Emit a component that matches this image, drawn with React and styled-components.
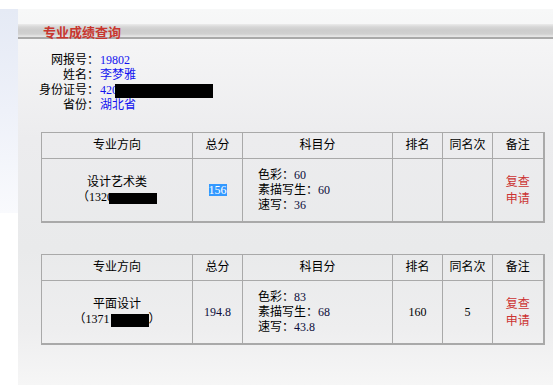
import React from "react";
import styled, { createGlobalStyle } from "styled-components";

const Global = createGlobalStyle`
  html, body { margin: 0; padding: 0; background: #ffffff; }
  body {
    font-family: "Liberation Serif", "Noto Sans CJK SC", serif;
    font-size: 12px;
    color: #000;
  }
`;

const Page = styled.div`
  display: flex;
  align-items: flex-start;
  padding-top: 9px;
  width: 553px;
  height: 376px;
  overflow: hidden;
`;

const LeftStrip = styled.div`
  width: 18px;
  flex: none;
  height: 204px;
  background: linear-gradient(to bottom, #e5eaf5 0%, #eef1f9 50%, #f9fafd 100%);
`;

const Panel = styled.div`
  flex: 1;
  height: 376px;
  background: linear-gradient(
    to bottom,
    #f7f8f8 0px,
    #f4f4f5 40px,
    #ececee 130px,
    #e9eaeb 240px,
    #eeeeef 320px,
    #f6f6f6 376px
  );
  padding-top: 15px;
  box-sizing: border-box;
`;

const HeaderBar = styled.div`
  height: 13px;
  border-bottom: 2px solid #a9a9a9;
  background: linear-gradient(
    to bottom,
    #ebebeb 0px,
    #d6d6d6 3px,
    #cdcdcd 6px,
    #d0d0d0 10px,
    #e4e4e4 12px,
    #e6e6e6 13px
  );
  padding-left: 25px;
`;

const Title = styled.span`
  display: block;
  font-family: "Noto Sans CJK SC", sans-serif;
  font-weight: bold;
  font-size: 13px;
  line-height: 14px;
  color: #c8362e;
  padding-top: 1px;
`;

const Info = styled.div`
  display: grid;
  grid-template-columns: 60px auto;
  column-gap: 1px;
  margin: 14px 0 0 21px;
  line-height: 15px;
`;

const Label = styled.span`
  text-align: right;
  white-space: nowrap;
`;

const Value = styled.span`
  color: #1212f0;
  white-space: nowrap;
`;

const Redact = styled.span`
  display: inline-block;
  background: #000;
  vertical-align: middle;
  width: ${(p) => p.$w}px;
  height: ${(p) => p.$h}px;
  margin-left: ${(p) => p.$ml || 0}px;
`;

const Table = styled.table`
  border-collapse: collapse;
  table-layout: fixed;
  width: 502px;
  margin: ${(p) => p.$mt}px 0 0 23px;
  border-right: 2px solid #a9a9a9;
  border-bottom: 2px solid #a9a9a9;
`;

const Col = styled.col`
  width: ${(p) => p.$w}px;
`;

const Th = styled.th`
  border: 1px solid #a9a9a9;
  height: 25px;
  padding: 0;
  font-weight: normal;
  text-align: center;
  vertical-align: middle;
  line-height: 15px;
  white-space: nowrap;
`;

const Td = styled.td`
  border: 1px solid #a9a9a9;
  height: 62px;
  padding: 0;
  text-align: ${(p) => (p.$left ? "left" : "center")};
  padding-left: ${(p) => (p.$left ? "15px" : "0")};
  vertical-align: middle;
  line-height: ${(p) => p.$lh || 15}px;
  white-space: nowrap;
`;

const Line = styled.div``;

const Score = styled.span`
  color: #0c0c3a;
`;

const Selected = styled.span`
  display: inline-block;
  background: #3399ff;
  color: #ffffff;
  line-height: 12px;
  padding: 0;
`;

const Remark = styled.span`
  color: #cc3333;
  font-family: "Noto Sans CJK SC", sans-serif;
`;

const headers = ["专业方向", "总分", "科目分", "排名", "同名次", "备注"];
const widths = [151, 50, 150, 50, 50, 51];

function Head() {
  return (
    <>
      <colgroup>
        {widths.map((w, i) => (
          <Col key={i} $w={w} />
        ))}
      </colgroup>
      <thead>
        <tr>
          {headers.map((h) => (
            <Th key={h}>{h}</Th>
          ))}
        </tr>
      </thead>
    </>
  );
}

function Subjects({ a, b, c }) {
  return (
    <Td $left>
      <Line>
        色彩：<Score>{a}</Score>
      </Line>
      <Line>
        素描写生：<Score>{b}</Score>
      </Line>
      <Line>
        速写：<Score>{c}</Score>
      </Line>
    </Td>
  );
}

function RemarkCell() {
  return (
    <Td $lh={16}>
      <Remark>
        复查
        <br />
        申请
      </Remark>
    </Td>
  );
}

export default function App() {
  return (
    <>
      <Global />
      <Page>
        <LeftStrip />
        <Panel>
          <HeaderBar>
            <Title>专业成绩查询</Title>
          </HeaderBar>
          <Info>
            <Label>网报号：</Label>
            <Value>19802</Value>
            <Label>姓名：</Label>
            <Value>李梦雅</Value>
            <Label>身份证号：</Label>
            <Value>
              420
              <Redact $w={98} $h={14} $ml={-3} />
            </Value>
            <Label>省份：</Label>
            <Value>湖北省</Value>
          </Info>

          <Table $mt={19}>
            <Head />
            <tbody>
              <tr>
                <Td>
                  <Line>设计艺术类</Line>
                  <Line>
                    （1320
                    <Redact $w={48} $h={11} $ml={-4} />
                  </Line>
                </Td>
                <Td>
                  <Selected>156</Selected>
                </Td>
                <Subjects a="60" b="60" c="36" />
                <Td />
                <Td />
                <RemarkCell />
              </tr>
            </tbody>
          </Table>

          <Table $mt={31}>
            <Head />
            <tbody>
              <tr>
                <Td>
                  <Line>平面设计</Line>
                  <Line>
                    （1371
                    <Redact $w={38} $h={13} $ml={1} />）
                  </Line>
                </Td>
                <Td>
                  <Score>194.8</Score>
                </Td>
                <Subjects a="83" b="68" c="43.8" />
                <Td>160</Td>
                <Td>5</Td>
                <RemarkCell />
              </tr>
            </tbody>
          </Table>
        </Panel>
      </Page>
    </>
  );
}
